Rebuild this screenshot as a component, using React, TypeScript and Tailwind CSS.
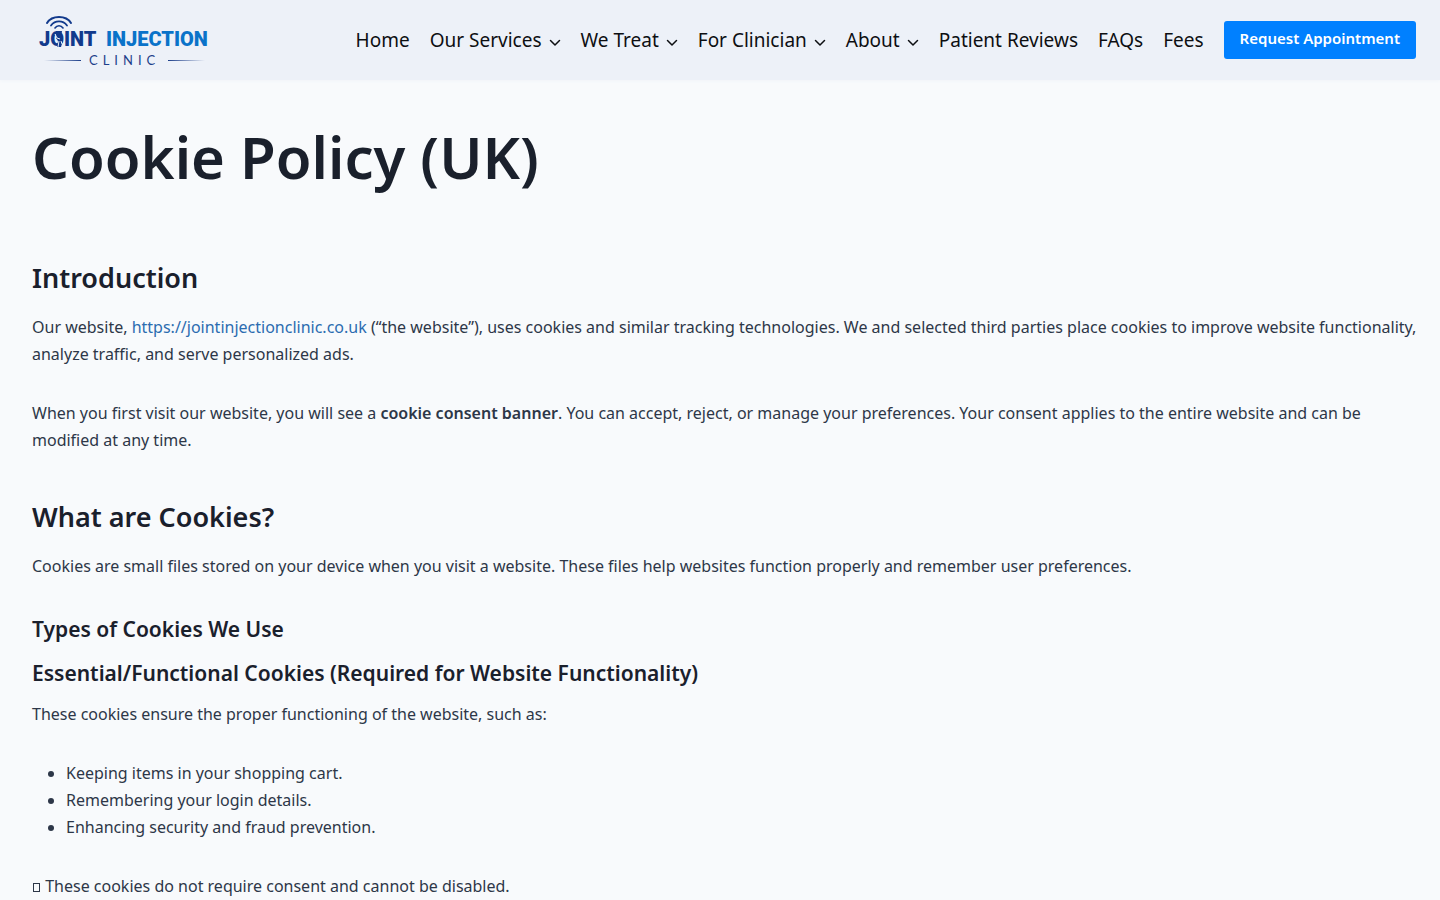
import type { ReactNode } from "react";

const navItems = [
  { label: "Home", hasMenu: false },
  { label: "Our Services", hasMenu: true },
  { label: "We Treat", hasMenu: true },
  { label: "For Clinician", hasMenu: true },
  { label: "About", hasMenu: true },
  { label: "Patient Reviews", hasMenu: false },
  { label: "FAQs", hasMenu: false },
  { label: "Fees", hasMenu: false },
];

const essentialUses = [
  "Keeping items in your shopping cart.",
  "Remembering your login details.",
  "Enhancing security and fraud prevention.",
];

function Logo() {
  return (
    <svg width="184" height="64" viewBox="0 0 184 64" role="img" aria-label="Joint Injection Clinic">
      <defs>
        <linearGradient id="ruleLeft">
          <stop offset="0" stopColor="#1d3f8a" stopOpacity="0" />
          <stop offset="1" stopColor="#1d3f8a" />
        </linearGradient>
        <linearGradient id="ruleRight">
          <stop offset="0" stopColor="#1d3f8a" />
          <stop offset="1" stopColor="#1d3f8a" stopOpacity="0" />
        </linearGradient>
      </defs>
      {/* signal arcs */}
      <g fill="none" stroke="#123a8c" strokeLinecap="round">
        <path d="M15 15C20 7 34 7 39 15" strokeWidth="2" />
        <path d="M19 17.500C23 12 31 12 35 17.500" strokeWidth="1.800" />
        <path d="M23 20C25 17 29 17 31 20" strokeWidth="1.600" />
      </g>
      <g fontFamily="Roboto, sans-serif" fontWeight="900" fontSize="20">
        <text x="7" y="38" fill="#123a8c">JOINT</text>
        <text x="74" y="38" fill="#0a73c9">INJECTION</text>
      </g>
      {/* knee joint inside the O */}
      <path d="M24 23h6l-1 6 2 3-2 7h-4l1-6-2-3z" fill="#123a8c" />
      <path d="M23 26l2 4 3 1M27 33l-1 6M29 33l1 3" fill="none" stroke="#edf1f8" strokeWidth="1" />
      <rect x="12" y="52" width="37" height="1" fill="url(#ruleLeft)" />
      <text x="57" y="57" fill="#1d3f8a" fontFamily="Lato, sans-serif" fontSize="13" letterSpacing="5">
        CLINIC
      </text>
      <rect x="136" y="52" width="37" height="1" fill="url(#ruleRight)" />
    </svg>
  );
}

function Chevron() {
  return (
    <svg width="12" height="8" viewBox="0 0 12 8" className="mt-1.5" aria-hidden="true">
      <path
        d="M1.500 1.500 6 6l4.500-4.500"
        fill="none"
        stroke="currentColor"
        strokeWidth="1.500"
        strokeLinecap="round"
        strokeLinejoin="round"
      />
    </svg>
  );
}

function SectionTitle({ children }: { children: ReactNode }) {
  return <h2 className="mb-[15px] text-[27px] leading-[42px] font-semibold text-[#1a202c]">{children}</h2>;
}

function SubTitle({ children }: { children: ReactNode }) {
  return <h3 className="mb-[11px] text-[21px] leading-[33px] font-semibold text-[#1a202c]">{children}</h3>;
}

export default function App() {
  return (
    <div className="min-h-screen bg-[#f8fafc] font-['Noto_Sans',sans-serif] text-[#2d3748]">
      <header className="flex min-h-20 items-center justify-between bg-[#edf1f8] pr-6 pl-8 shadow-[0_0_4px_#edf1f8]">
        <a href="#" className="shrink-0">
          <Logo />
        </a>
        <nav className="flex items-center gap-5">
          {navItems.map((item) => (
            <a
              key={item.label}
              href="#"
              className="flex items-center gap-[7px] text-[19px] leading-8 whitespace-nowrap text-[#0d0f12]"
            >
              {item.label}
              {item.hasMenu && <Chevron />}
            </a>
          ))}
          <button
            type="button"
            className="h-[38px] rounded-[3px] bg-[#0080ff] px-4 pb-1 text-[15px] font-semibold whitespace-nowrap text-white"
          >
            Request Appointment
          </button>
        </nav>
      </header>

      <main className="pt-8 pr-4 pl-8 text-[16px] leading-[27px]">
        <h1 className="mb-[55px] text-[58px] leading-[90px] font-semibold text-[#1a202c]">Cookie Policy (UK)</h1>

        <section className="mb-[42px]">
          <SectionTitle>Introduction</SectionTitle>
          <p className="mb-8">
            Our website,{" "}
            <a href="#" className="text-[#2b6cb0]">
              https://jointinjectionclinic.co.uk
            </a>{" "}
            (“the website”), uses cookies and similar tracking technologies. We and selected third parties place
            cookies to improve website functionality, analyze traffic, and serve personalized ads.
          </p>
          <p>
            When you first visit our website, you will see a <strong className="font-semibold">cookie consent banner</strong>.
            You can accept, reject, or manage your preferences. Your consent applies to the entire website and can be
            modified at any time.
          </p>
        </section>

        <section>
          <SectionTitle>What are Cookies?</SectionTitle>
          <p className="mb-[33px]">
            Cookies are small files stored on your device when you visit a website. These files help websites function
            properly and remember user preferences.
          </p>
          <SubTitle>Types of Cookies We Use</SubTitle>
          <SubTitle>Essential/Functional Cookies (Required for Website Functionality)</SubTitle>
          <p className="mb-8">These cookies ensure the proper functioning of the website, such as:</p>
          <ul className="mb-8 list-disc pl-[34px]">
            {essentialUses.map((use) => (
              <li key={use}>{use}</li>
            ))}
          </ul>
          <p>
            <span className="mx-px inline-block h-[9px] w-[7px] border border-current" />{" "}
            These cookies do not require consent and cannot be disabled.
          </p>
        </section>
      </main>
    </div>
  );
}
